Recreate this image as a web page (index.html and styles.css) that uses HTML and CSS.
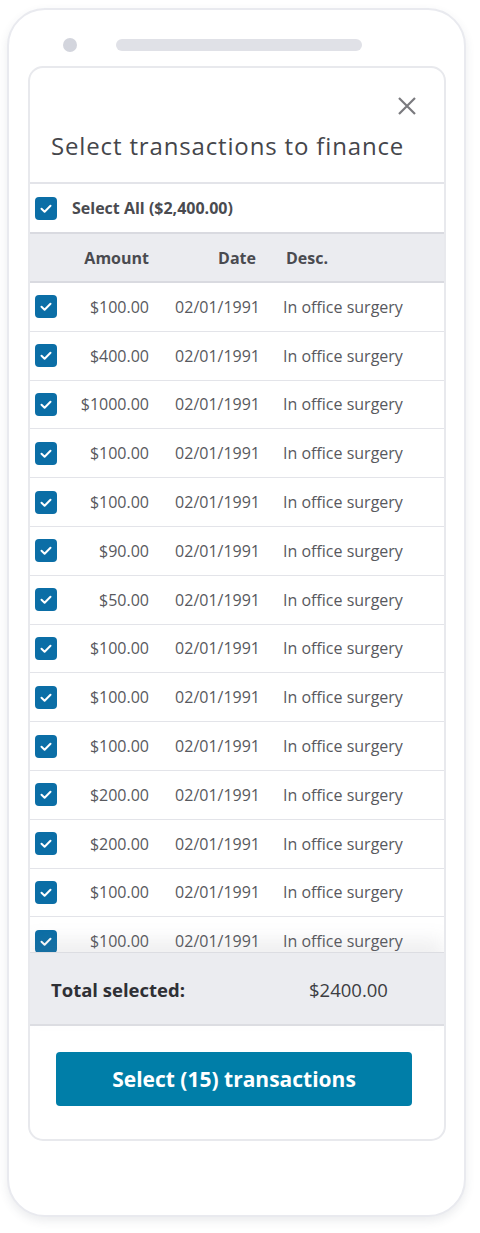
FILE: index.html
```html
<!DOCTYPE html>
<html>
<head>
<meta charset="utf-8">
<link rel="stylesheet" href="styles.css">
</head>
<body>
<div class="phone">
  <div class="phone-top">
    <span class="cam"></span>
    <span class="speaker"></span>
  </div>
  <div class="card">
    <div class="card-head">
      <button class="close" aria-label="Close">
        <svg width="20" height="20" viewBox="0 0 20 20"><path d="M2 2 L18 18 M18 2 L2 18" stroke="#7a7a7e" stroke-width="2.2" stroke-linecap="butt" fill="none"/></svg>
      </button>
      <h1 class="title">Select transactions to finance</h1>
    </div>
    <div class="select-all">
      <span class="cb"><svg viewBox="0 0 22 22"><path d="M6.5 11.2 L9.6 14.2 L15.5 8.2" stroke="#fff" stroke-width="2" fill="none" stroke-linecap="round" stroke-linejoin="round"/></svg></span>
      <span class="sa-label">Select All ($2,400.00)</span>
    </div>
    <div class="thead">
      <span class="c-cb"></span>
      <span class="c-amt">Amount</span>
      <span class="c-date h-date">Date</span>
      <span class="c-desc h-desc">Desc.</span>
    </div>
    <div class="list">
      <div class="row"><span class="cb"><svg viewBox="0 0 22 22"><path d="M6.5 11.2 L9.6 14.2 L15.5 8.2" stroke="#fff" stroke-width="2" fill="none" stroke-linecap="round" stroke-linejoin="round"/></svg></span><span class="c-amt">$100.00</span><span class="c-date">02/01/1991</span><span class="c-desc">In office surgery</span></div>
      <div class="row"><span class="cb"><svg viewBox="0 0 22 22"><path d="M6.5 11.2 L9.6 14.2 L15.5 8.2" stroke="#fff" stroke-width="2" fill="none" stroke-linecap="round" stroke-linejoin="round"/></svg></span><span class="c-amt">$400.00</span><span class="c-date">02/01/1991</span><span class="c-desc">In office surgery</span></div>
      <div class="row"><span class="cb"><svg viewBox="0 0 22 22"><path d="M6.5 11.2 L9.6 14.2 L15.5 8.2" stroke="#fff" stroke-width="2" fill="none" stroke-linecap="round" stroke-linejoin="round"/></svg></span><span class="c-amt">$1000.00</span><span class="c-date">02/01/1991</span><span class="c-desc">In office surgery</span></div>
      <div class="row"><span class="cb"><svg viewBox="0 0 22 22"><path d="M6.5 11.2 L9.6 14.2 L15.5 8.2" stroke="#fff" stroke-width="2" fill="none" stroke-linecap="round" stroke-linejoin="round"/></svg></span><span class="c-amt">$100.00</span><span class="c-date">02/01/1991</span><span class="c-desc">In office surgery</span></div>
      <div class="row"><span class="cb"><svg viewBox="0 0 22 22"><path d="M6.5 11.2 L9.6 14.2 L15.5 8.2" stroke="#fff" stroke-width="2" fill="none" stroke-linecap="round" stroke-linejoin="round"/></svg></span><span class="c-amt">$100.00</span><span class="c-date">02/01/1991</span><span class="c-desc">In office surgery</span></div>
      <div class="row"><span class="cb"><svg viewBox="0 0 22 22"><path d="M6.5 11.2 L9.6 14.2 L15.5 8.2" stroke="#fff" stroke-width="2" fill="none" stroke-linecap="round" stroke-linejoin="round"/></svg></span><span class="c-amt">$90.00</span><span class="c-date">02/01/1991</span><span class="c-desc">In office surgery</span></div>
      <div class="row"><span class="cb"><svg viewBox="0 0 22 22"><path d="M6.5 11.2 L9.6 14.2 L15.5 8.2" stroke="#fff" stroke-width="2" fill="none" stroke-linecap="round" stroke-linejoin="round"/></svg></span><span class="c-amt">$50.00</span><span class="c-date">02/01/1991</span><span class="c-desc">In office surgery</span></div>
      <div class="row"><span class="cb"><svg viewBox="0 0 22 22"><path d="M6.5 11.2 L9.6 14.2 L15.5 8.2" stroke="#fff" stroke-width="2" fill="none" stroke-linecap="round" stroke-linejoin="round"/></svg></span><span class="c-amt">$100.00</span><span class="c-date">02/01/1991</span><span class="c-desc">In office surgery</span></div>
      <div class="row"><span class="cb"><svg viewBox="0 0 22 22"><path d="M6.5 11.2 L9.6 14.2 L15.5 8.2" stroke="#fff" stroke-width="2" fill="none" stroke-linecap="round" stroke-linejoin="round"/></svg></span><span class="c-amt">$100.00</span><span class="c-date">02/01/1991</span><span class="c-desc">In office surgery</span></div>
      <div class="row"><span class="cb"><svg viewBox="0 0 22 22"><path d="M6.5 11.2 L9.6 14.2 L15.5 8.2" stroke="#fff" stroke-width="2" fill="none" stroke-linecap="round" stroke-linejoin="round"/></svg></span><span class="c-amt">$100.00</span><span class="c-date">02/01/1991</span><span class="c-desc">In office surgery</span></div>
      <div class="row"><span class="cb"><svg viewBox="0 0 22 22"><path d="M6.5 11.2 L9.6 14.2 L15.5 8.2" stroke="#fff" stroke-width="2" fill="none" stroke-linecap="round" stroke-linejoin="round"/></svg></span><span class="c-amt">$200.00</span><span class="c-date">02/01/1991</span><span class="c-desc">In office surgery</span></div>
      <div class="row"><span class="cb"><svg viewBox="0 0 22 22"><path d="M6.5 11.2 L9.6 14.2 L15.5 8.2" stroke="#fff" stroke-width="2" fill="none" stroke-linecap="round" stroke-linejoin="round"/></svg></span><span class="c-amt">$200.00</span><span class="c-date">02/01/1991</span><span class="c-desc">In office surgery</span></div>
      <div class="row"><span class="cb"><svg viewBox="0 0 22 22"><path d="M6.5 11.2 L9.6 14.2 L15.5 8.2" stroke="#fff" stroke-width="2" fill="none" stroke-linecap="round" stroke-linejoin="round"/></svg></span><span class="c-amt">$100.00</span><span class="c-date">02/01/1991</span><span class="c-desc">In office surgery</span></div>
      <div class="row"><span class="cb"><svg viewBox="0 0 22 22"><path d="M6.5 11.2 L9.6 14.2 L15.5 8.2" stroke="#fff" stroke-width="2" fill="none" stroke-linecap="round" stroke-linejoin="round"/></svg></span><span class="c-amt">$100.00</span><span class="c-date">02/01/1991</span><span class="c-desc">In office surgery</span></div>
      <div class="row"><span class="cb"><svg viewBox="0 0 22 22"><path d="M6.5 11.2 L9.6 14.2 L15.5 8.2" stroke="#fff" stroke-width="2" fill="none" stroke-linecap="round" stroke-linejoin="round"/></svg></span><span class="c-amt">$100.00</span><span class="c-date">02/01/1991</span><span class="c-desc">In office surgery</span></div>
    </div>
    <div class="total">
      <span class="total-label">Total selected:</span>
      <span class="total-value">$2400.00</span>
    </div>
    <div class="actions">
      <button class="primary">Select (15) transactions</button>
    </div>
  </div>
</div>
</body>
</html>
```
FILE: styles.css
```css
* { box-sizing: border-box; }
html, body { margin: 0; padding: 0; background: #fff; }
body {
  font-family: "Open Sans", "Liberation Sans", sans-serif;
  width: 480px;
  height: 1233px;
  overflow: hidden;
}
.phone {
  margin: 8px 0 0 7px;
  width: 459px;
  height: 1209px;
  border: 2px solid #e9eaef;
  border-radius: 38px;
  background: #fff;
  box-shadow: 0 4px 10px rgba(60, 64, 90, 0.10);
  padding: 0 18px 0 19px;
}
.phone-top {
  height: 56px;
  display: flex;
  align-items: center;
  padding-top: 14px;
  padding-left: 35px;
}
.cam {
  width: 14px;
  height: 14px;
  border-radius: 50%;
  background: #d3d5dd;
  flex: none;
}
.speaker {
  margin-left: 39px;
  width: 246px;
  height: 12px;
  border-radius: 6px;
  background: #e0e1e7;
}
.card {
  border: 2px solid #e8e9ed;
  border-radius: 15px;
  height: 1075px;
  display: flex;
  flex-direction: column;
  overflow: hidden;
  background: #fff;
}
.card-head {
  height: 116px;
  border-bottom: 2px solid #e3e4e9;
  display: flex;
  flex-direction: column;
  padding: 28px 0 0 21px;
}
.close {
  align-self: flex-end;
  margin-right: 27px;
  width: 20px;
  height: 20px;
  padding: 0;
  border: 0;
  background: none;
  display: block;
}
.close svg { display: block; }
.title {
  margin: 14px 0 0 0;
  font-family: "Open Sans", sans-serif;
  font-weight: 400;
  font-size: 24px;
  line-height: 32px;
  color: #45464b;
  letter-spacing: 0.85px;
  white-space: nowrap;
}
.cb {
  width: 22px;
  height: 23px;
  border-radius: 4px;
  background: #0b6ea6;
  flex: none;
  display: block;
}
.cb svg { display: block; width: 22px; height: 23px; }
.select-all {
  height: 48px;
  display: flex;
  align-items: center;
  padding-left: 5px;
}
.sa-label {
  margin-left: 15px;
  font-weight: 700;
  font-size: 16px;
  color: #4a4b50;
}
.thead {
  height: 51px;
  background: #ebecf0;
  border-top: 2px solid #d9dae0;
  border-bottom: 2px solid #d9dae0;
  display: flex;
  align-items: center;
  padding-left: 5px;
  font-weight: 700;
  font-size: 16px;
  color: #4a4b50;
}
.c-cb { width: 22px; flex: none; }
.c-amt { width: 92px; text-align: right; flex: none; }
.c-date { width: 111px; text-align: right; flex: none; }
.c-desc { margin-left: 23px; white-space: nowrap; }
.h-date { padding-right: 4px; }
.h-desc { margin-left: 26px; }
.list {
  height: 669px;
  overflow: hidden;
}
.row {
  height: 48.8px;
  border-bottom: 1px solid #e3e4e9;
  display: flex;
  align-items: center;
  padding-left: 5px;
  font-size: 16px;
  color: #58595e;
}
.total {
  position: relative;
  height: 74px;
  background: #ebecf0;
  border-top: 1px solid #dcdde2;
  border-bottom: 2px solid #dcdde2;
  box-shadow: 0 -12px 18px rgba(120, 122, 135, 0.12);
  display: flex;
  align-items: center;
  padding-left: 21px;
  padding-top: 2px;
}
.total-label {
  width: 258px;
  flex: none;
  font-weight: 700;
  font-size: 18.5px;
  color: #2f3035;
}
.total-value {
  font-size: 18.5px;
  color: #3c3d42;
}
.actions {
  flex: 1;
  padding: 26px 0 0 26px;
}
.primary {
  width: 356px;
  height: 54px;
  border: 0;
  border-radius: 4px;
  background: #007ea8;
  color: #fff;
  font-family: "Open Sans", sans-serif;
  font-weight: 700;
  font-size: 21px;
  padding: 0;
}
```
